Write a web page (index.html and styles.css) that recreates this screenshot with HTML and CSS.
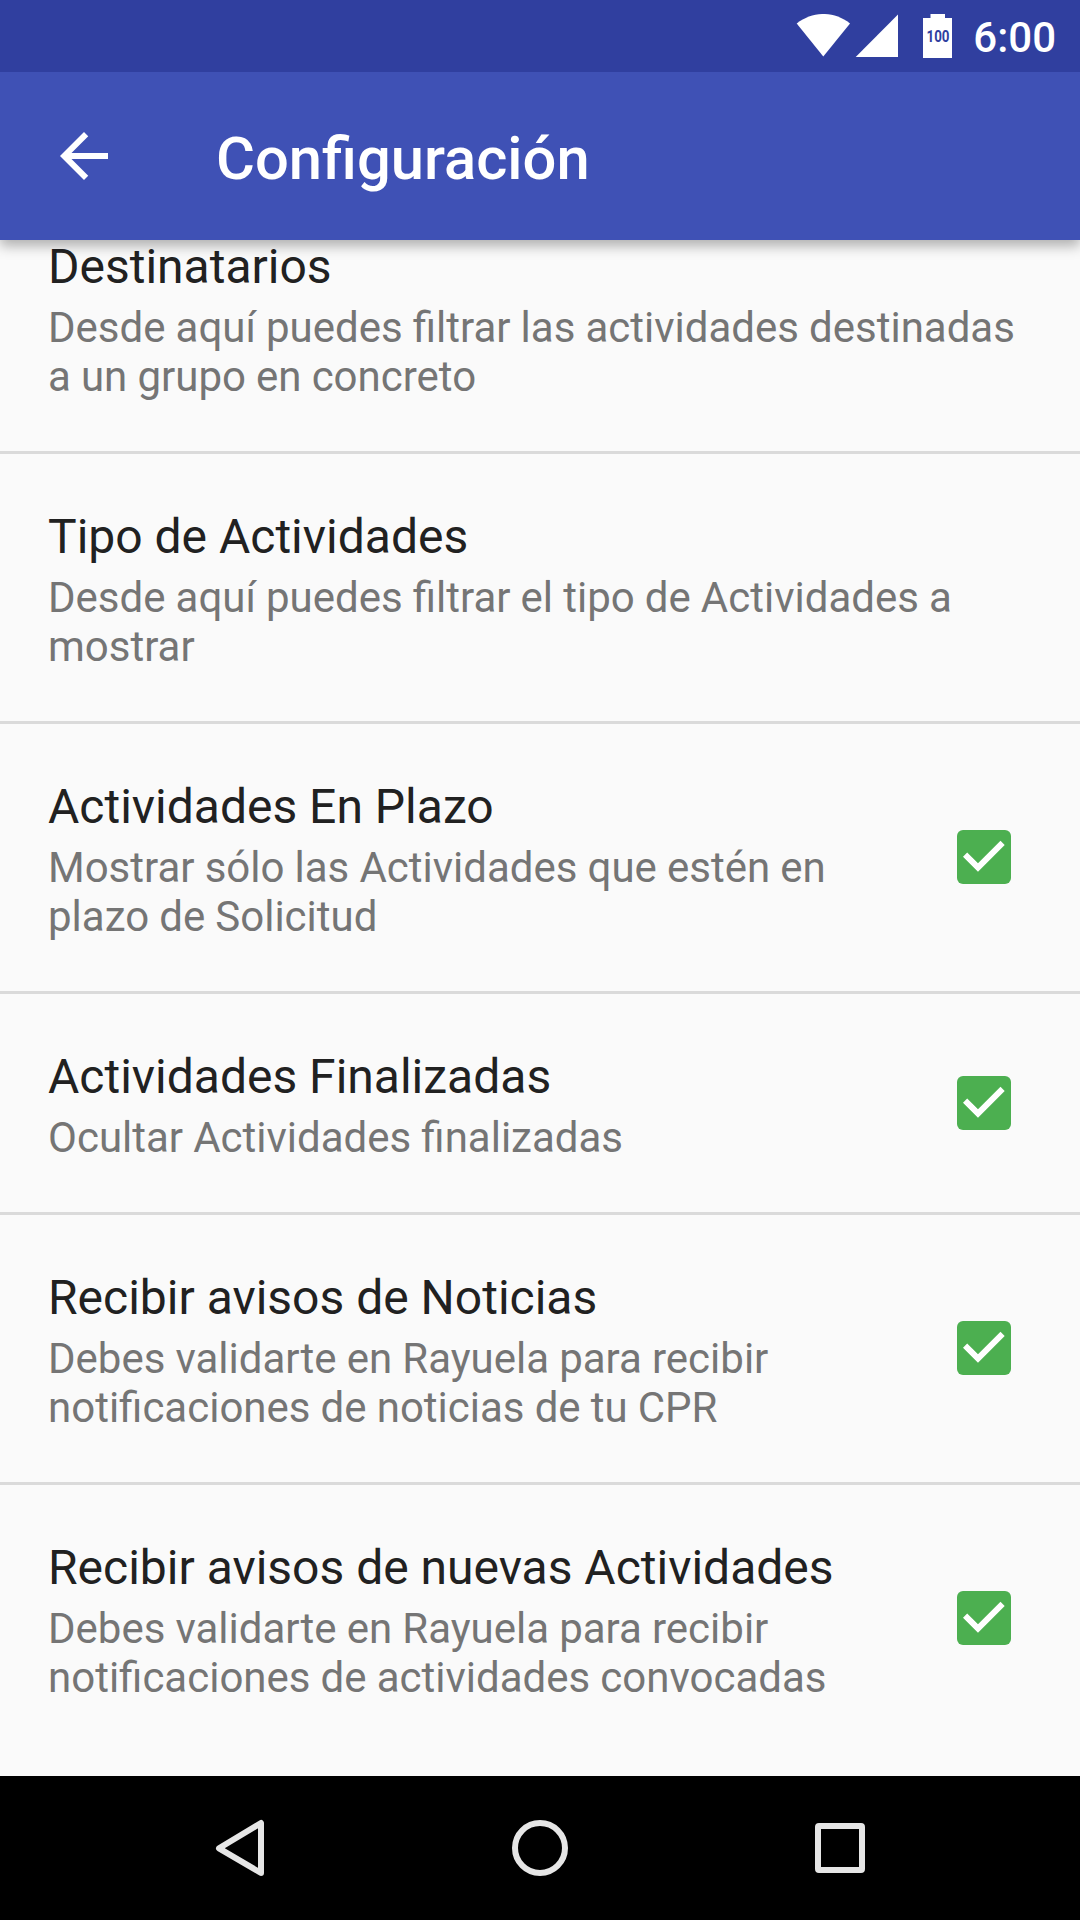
FILE: index.html
```html
<!DOCTYPE html>
<html lang="es">
<head>
  <meta charset="UTF-8" />
  <meta name="viewport" content="width=device-width, initial-scale=1.0" />
  <title>Configuración</title>
  <link rel="stylesheet" href="styles.css">
</head>
<body>
  <div class="status-bar">
    <svg class="status-icons" viewBox="0 0 156 44" fill="#fff">
      <path d="M0.7 9.5C17 -3.2 38 -3.2 54 9.5L27.3 42.5Z" />
      <path d="M102 0.5V43H59.7Z" />
      <path d="M134.5 0H149V4H156V44H127V4H134.5Z" />
      <text class="battery-level" x="130.5" y="27.8" textLength="23" lengthAdjust="spacingAndGlyphs">100</text>
    </svg>
    <span class="clock">6:00</span>
  </div>
  <header class="toolbar">
    <svg class="back-icon" viewBox="0 0 24 24" fill="#fff">
      <path d="M20 11H7.83l5.59-5.59L12 4l-8 8 8 8 1.41-1.41L7.83 13H20v-2z" />
    </svg>
    <h1 class="toolbar-title">Configuración</h1>
  </header>
  <main class="content">
    <ul class="settings-list">
      <li class="setting">
        <div class="setting-text">
          <div class="setting-title">Destinatarios</div>
          <div class="setting-summary">Desde aquí puedes filtrar las actividades destinadas a un grupo en concreto</div>
        </div>
      </li>
      <li class="setting">
        <div class="setting-text">
          <div class="setting-title">Tipo de Actividades</div>
          <div class="setting-summary">Desde aquí puedes filtrar el tipo de Actividades a mostrar</div>
        </div>
      </li>
      <li class="setting">
        <div class="setting-text">
          <div class="setting-title">Actividades En Plazo</div>
          <div class="setting-summary">Mostrar sólo las Actividades que estén en plazo de Solicitud</div>
        </div>
        <svg class="checkbox" viewBox="0 0 54 54"><path d="M6 26.7l4.2-4.2L21 33.3 43.5 10.7l4.2 4.2L21 41.7z" /></svg>
      </li>
      <li class="setting">
        <div class="setting-text">
          <div class="setting-title">Actividades Finalizadas</div>
          <div class="setting-summary">Ocultar Actividades finalizadas</div>
        </div>
        <svg class="checkbox" viewBox="0 0 54 54"><path d="M6 26.7l4.2-4.2L21 33.3 43.5 10.7l4.2 4.2L21 41.7z" /></svg>
      </li>
      <li class="setting">
        <div class="setting-text">
          <div class="setting-title">Recibir avisos de Noticias</div>
          <div class="setting-summary">Debes validarte en Rayuela para recibir notificaciones de noticias de tu CPR</div>
        </div>
        <svg class="checkbox" viewBox="0 0 54 54"><path d="M6 26.7l4.2-4.2L21 33.3 43.5 10.7l4.2 4.2L21 41.7z" /></svg>
      </li>
      <li class="setting">
        <div class="setting-text">
          <div class="setting-title">Recibir avisos de nuevas Actividades</div>
          <div class="setting-summary">Debes validarte en Rayuela para recibir notificaciones de actividades convocadas</div>
        </div>
        <svg class="checkbox" viewBox="0 0 54 54"><path d="M6 26.7l4.2-4.2L21 33.3 43.5 10.7l4.2 4.2L21 41.7z" /></svg>
      </li>
    </ul>
  </main>
  <nav class="nav-bar">
    <svg class="nav-icon" viewBox="0 0 72 72"><path d="M15 36.3L57 11V61Z" /></svg>
    <svg class="nav-icon" viewBox="0 0 72 72"><circle cx="36" cy="36" r="25" /></svg>
    <svg class="nav-icon" viewBox="0 0 72 72"><rect x="14" y="14" width="44" height="44" rx="1" /></svg>
  </nav>
</body>
</html>
```
FILE: styles.css
```css
* {
  box-sizing: border-box;
}
body {
  display: flex;
  flex-direction: column;
  width: 1080px;
  height: 1920px;
  margin: 0;
  background: #fafafa;
  font-family: Roboto, "Noto Sans", sans-serif;
  overflow: hidden;
}
.status-bar {
  position: relative;
  z-index: 2;
  display: flex;
  flex: none;
  align-items: center;
  justify-content: flex-end;
  gap: 21px;
  height: 72px;
  padding-right: 24px;
  background: #303f9f;
}
.status-icons {
  width: 156px;
  height: 44px;
}
.battery-level {
  fill: #303f9f;
  font-size: 17px;
  font-weight: 700;
}
.clock {
  color: #fff;
  font-size: 42px;
  font-weight: 500;
  line-height: 49px;
  padding-top: 2px;
}
.toolbar {
  position: relative;
  z-index: 1;
  display: flex;
  flex: none;
  align-items: center;
  gap: 96px;
  height: 168px;
  padding: 0 48px;
  background: #3f51b5;
  box-shadow: 0 6px 12px rgba(0, 0, 0, 0.3);
}
.back-icon {
  width: 72px;
  height: 72px;
}
.toolbar-title {
  margin: 0;
  padding-top: 6px;
  color: #fff;
  font-size: 59.7px;
  font-weight: 500;
  line-height: 70px;
}
.content {
  flex: 1;
  min-height: 0;
  overflow: hidden;
}
/* list is scrolled a little under the toolbar */
.settings-list {
  margin: -56px 0 0;
  padding: 0;
  list-style: none;
}
.setting {
  display: flex;
  align-items: center;
  justify-content: space-between;
  padding: 56px 48px 50px;
  border-bottom: 3px solid #dadada;
}
.setting:last-child {
  border-bottom: none;
}
.setting-text {
  max-width: 984px;
}
.setting-title {
  margin-bottom: 10px;
  color: #212121;
  font-size: 48px;
  line-height: 53px;
}
.setting-summary {
  color: #757575;
  font-size: 42px;
  line-height: 49px;
  word-spacing: -0.3px;
}
.checkbox {
  flex: none;
  width: 54px;
  height: 54px;
  margin: -7px 21px 0 90px;
  border-radius: 6px;
  background: #4caf50;
  fill: #fff;
}
.nav-bar {
  display: flex;
  flex: none;
  align-items: center;
  justify-content: center;
  gap: 228px;
  height: 144px;
  background: #000;
}
.nav-icon {
  width: 72px;
  height: 72px;
  fill: none;
  stroke: #e6e6e6;
  stroke-width: 6;
  stroke-linejoin: round;
}
```
